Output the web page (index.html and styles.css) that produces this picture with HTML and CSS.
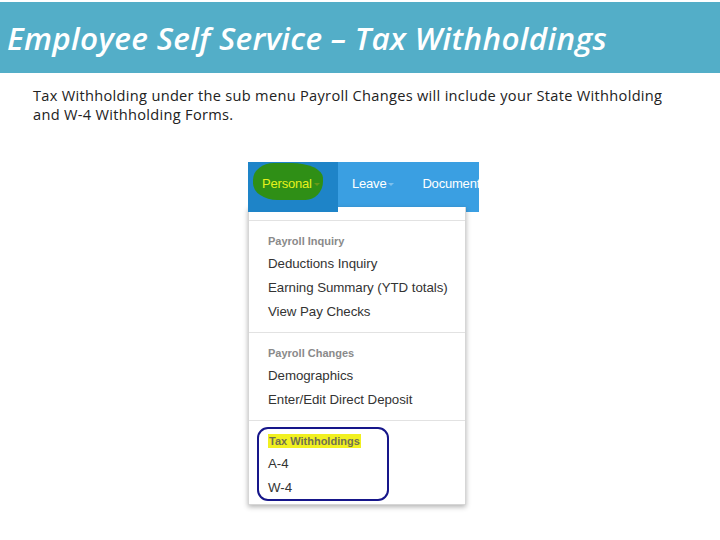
FILE: index.html
```html
<!DOCTYPE html>
<html>
<head>
<meta charset="utf-8">
<link rel="stylesheet" href="styles.css">
</head>
<body>
<header class="banner"><h1 class="title">Employee Self Service – Tax Withholdings</h1></header>
<p class="intro">Tax Withholding under the sub menu Payroll Changes will include your State Withholding and W-4 Withholding Forms.</p>
<div class="shot">
  <nav class="nav">
    <div class="tab tab-active"><span class="blob"></span><span class="tab-label hl">Personal<span class="caret"></span></span></div>
    <div class="tab"><span class="tab-label">Leave<span class="caret"></span></span></div>
    <div class="tab tab-cut"><span class="tab-label">Documents</span></div>
  </nav>
  <div class="menu">
    <div class="sect">
      <div class="head">Payroll Inquiry</div>
      <div class="item">Deductions Inquiry</div>
      <div class="item">Earning Summary (YTD totals)</div>
      <div class="item">View Pay Checks</div>
    </div>
    <div class="sect">
      <div class="head">Payroll Changes</div>
      <div class="item">Demographics</div>
      <div class="item">Enter/Edit Direct Deposit</div>
    </div>
    <div class="sect last">
      <div class="ring"></div>
      <div class="head"><span class="mark">Tax Withholdings</span></div>
      <div class="item">A-4</div>
      <div class="item">W-4</div>
    </div>
  </div>
</div>
</body>
</html>
```
FILE: styles.css
```css
html, body { margin: 0; padding: 0; background: #fff; }
body { width: 720px; height: 540px; overflow: hidden; }

.banner {
  margin-top: 2px;
  height: 71px;
  background: #53aec8;
  display: flex;
  align-items: center;
}
.title {
  margin: 0 0 0 7px;
  font-family: "Open Sans", "Noto Sans", sans-serif;
  font-style: italic;
  font-weight: 600;
  font-size: 31.5px;
  letter-spacing: 0.33px;
  color: #fff;
}

.intro {
  margin: 13px 30px 0 33px;
  font-family: "Open Sans", "Noto Sans", sans-serif;
  font-size: 14.6px;
  line-height: 19px;
  letter-spacing: 0.3px;
  color: #222;
}

.shot {
  margin: 38px 0 0 248px;
  width: 231px;
  font-family: "Liberation Sans", Arial, sans-serif;
}

.nav {
  display: flex;
  height: 50px;
  background: #3a9fe2;
  overflow: hidden;
}
.tab {
  position: relative;
  flex-shrink: 0;
  display: flex;
  align-items: center;
  padding: 0 14px 8px 14px;
  color: #fff;
  font-size: 13px;
  white-space: nowrap;
  letter-spacing: -0.2px;
}
.tab-active {
  background: #1e84c8;
  width: 62px;
}
.tab-cut { padding-right: 0; }
.tab-label { position: relative; }
.hl { color: #e6f21c; }
.blob {
  position: absolute;
  left: 5px; top: 1px;
  width: 70px; height: 37px;
  background: #2f8f16;
  border-radius: 30% 45% 25% 35% / 45% 40% 50% 45%;
}
.caret {
  display: inline-block;
  width: 0; height: 0;
  margin-left: 2px;
  vertical-align: middle;
  border-left: 3px solid transparent;
  border-right: 3px solid transparent;
  border-top: 3px solid rgba(255,255,255,0.35);
}
.hl .caret { border-top-color: #6a9a18; }

.menu {
  width: 218px;
  background: #fff;
  margin-top: -5px;
  padding-top: 13px;
  box-shadow: 0 2px 5px rgba(0,0,0,0.3);
  border: 1px solid #d6d6d6;
  border-top: none;
  box-sizing: border-box;
}
.sect {
  position: relative;
  border-top: 1px solid #e2e2e2;
  padding: 12px 0 8px 19px;
}
.sect.last { padding-bottom: 4px; }
.head {
  font-size: 11px;
  font-weight: bold;
  color: #8a8a8a;
  height: 17px;
  line-height: 17px;
  margin-bottom: 2px;
}
.item {
  font-size: 13.3px;
  color: #333;
  height: 24px;
  line-height: 24px;
  letter-spacing: -0.05px;
}
.mark { background: #f1f020; color: #707050; padding: 1px 1px; }
.ring {
  position: absolute;
  left: 8px; top: 6px;
  width: 128px; height: 70px;
  border: 2px solid #16168a;
  border-radius: 11px;
}
```
